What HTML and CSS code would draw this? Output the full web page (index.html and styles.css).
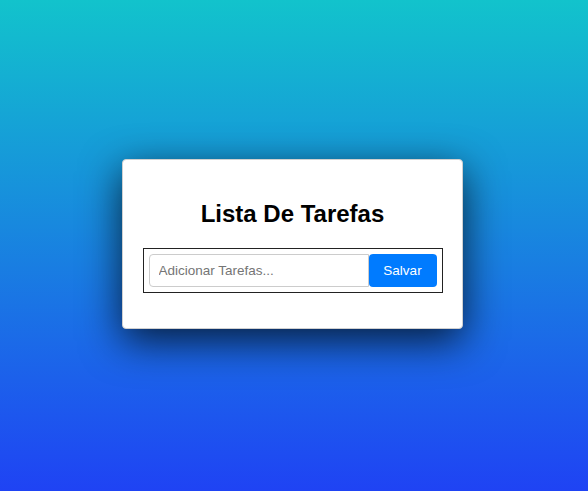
FILE: index.html
```html
<!DOCTYPE html>
<html lang="pt">
<head>
<meta charset="utf-8">
<title>Lista De Tarefas</title>
<link rel="stylesheet" href="styles.css">
</head>
<body>
<main class="card">
  <h1 class="title">Lista De Tarefas</h1>
  <form class="todo-form">
    <input class="todo-input" type="text" placeholder="Adicionar Tarefas...">
    <button class="todo-btn" type="button">Salvar</button>
  </form>
</main>
</body>
</html>
```

FILE: styles.css
```css
html, body {
  margin: 0;
  height: 100%;
}
body {
  background: linear-gradient(to bottom, #12c3cc 0%, #1f43f4 100%);
  display: flex;
  align-items: center;
  justify-content: center;
  font-family: "Liberation Sans", Arial, sans-serif;
}
.card {
  box-sizing: border-box;
  width: 341px;
  height: 170px;
  margin: 0 3px 3px 0;
  background: #fff;
  border: 1px solid #d0d0d0;
  border-radius: 4px;
  box-shadow: 0 12px 40px rgba(0, 0, 0, 0.75);
  display: flex;
  flex-direction: column;
  align-items: center;
  padding-top: 40px;
}
.title {
  margin: 0 0 20px;
  font-family: "Liberation Sans", Arial, sans-serif;
  font-size: 24px;
  font-weight: bold;
  color: #000;
  line-height: 28px;
}
.todo-form {
  box-sizing: border-box;
  width: 300px;
  height: 45px;
  border: 1px solid #222;
  padding: 5px;
  display: flex;
  margin: 0;
}
.todo-input {
  box-sizing: border-box;
  width: 220px;
  height: 33px;
  border: 1px solid #ccc;
  border-radius: 4px 0 0 4px;
  padding: 0 9px;
  font-family: "Liberation Sans", Arial, sans-serif;
  font-size: 13.5px;
  color: #333;
  outline: none;
}
.todo-input::placeholder {
  color: #757575;
}
.todo-btn {
  box-sizing: border-box;
  width: 68px;
  height: 33px;
  border: none;
  border-radius: 4px;
  background: #007bff;
  color: #fff;
  font-family: "Liberation Sans", Arial, sans-serif;
  font-size: 13.5px;
  padding: 0;
  cursor: pointer;
}
```
